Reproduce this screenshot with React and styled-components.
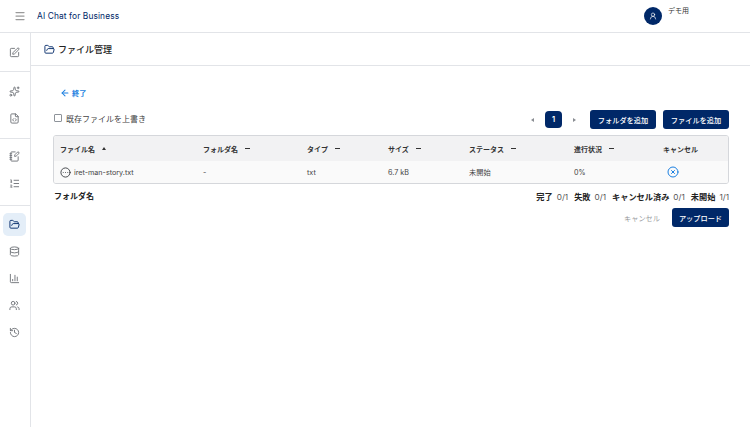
import styled, { createGlobalStyle } from 'styled-components';
import {
  Menu, SquarePen, Sparkles, FileCode, NotebookPen, ListOrdered, FolderOpen,
  Database, ChartColumn, Users, History, ArrowLeft, CircleEllipsis, CircleX, UserRound,
} from 'lucide-react';

const navy = '#002868';
const line = '#e2e4e8';

const GlobalStyle = createGlobalStyle`
  html, body { margin: 0; height: 100%; background: #fff; }
  body {
    font-family: Inter, "Noto Sans CJK JP", sans-serif;
    color: #222;
    overflow: hidden;
  }
  button { font-family: inherit; }
`;

const Page = styled.div`
  display: flex;
  flex-direction: column;
  width: 750px;
  height: 427px;
`;

const TopBar = styled.header`
  display: flex;
  align-items: center;
  height: 32px;
  flex: none;
  border-bottom: 1px solid ${line};
  padding-left: 14px;
`;

const MenuIcon = styled(Menu)`
  width: 12px;
  height: 12px;
  color: #9a9a9a;
`;

const Brand = styled.div`
  margin-left: 11px;
  font-size: 8.4px;
  font-weight: 400;
  letter-spacing: 0.1px;
  color: ${navy};
`;

const UserBox = styled.div`
  display: flex;
  align-items: flex-start;
  gap: 6px;
  margin-left: auto;
  margin-right: 39px;
  width: 67px;
`;

const Avatar = styled.div`
  display: flex;
  align-items: center;
  justify-content: center;
  width: 18px;
  height: 18px;
  border-radius: 50%;
  background: ${navy};
  color: #fff;
`;

const UserName = styled.div`
  font-size: 7px;
  line-height: 10px;
  margin-top: -1px;
  color: #333;
`;

const Body = styled.div`
  display: flex;
  flex: 1;
  min-height: 0;
`;

const Sidebar = styled.nav`
  display: flex;
  flex-direction: column;
  align-items: center;
  width: 30px;
  flex: none;
  border-right: 1px solid ${line};
`;

const NavGroup = styled.div`
  display: flex;
  flex-direction: column;
  align-items: center;
  box-sizing: border-box;
  width: 100%;
  gap: 4px;
  padding: ${(p) => p.$pad};
  border-bottom: ${(p) => (p.$last ? 'none' : `1px solid ${line}`)};
`;

const NavItem = styled.div`
  display: flex;
  align-items: center;
  justify-content: center;
  width: 23px;
  height: 23px;
  border-radius: 5px;
  background: ${(p) => (p.$active ? '#e4eef8' : 'transparent')};
  color: ${(p) => (p.$active ? navy : '#6f7277')};
  svg { width: 11px; height: 11px; }
`;

const Main = styled.main`
  flex: 1;
  min-width: 0;
  display: flex;
  flex-direction: column;
`;

const TitleBar = styled.div`
  display: flex;
  align-items: center;
  gap: 3px;
  height: 32px;
  flex: none;
  padding-left: 13px;
  border-bottom: 1px solid ${line};
`;

const TitleIcon = styled(FolderOpen)`
  width: 11px;
  height: 11px;
  color: ${navy};
`;

const Title = styled.h1`
  margin: 0;
  font-size: 9px;
  font-weight: 500;
  color: #222;
`;

const Content = styled.div`
  display: flex;
  flex-direction: column;
  padding: 20px 21px 0 22px;
`;

const BackLink = styled.a`
  display: flex;
  align-items: center;
  gap: 2px;
  height: 14px;
  margin-left: 7px;
  font-size: 7.2px;
  font-weight: 700;
  color: #1a7fe0;
  svg { width: 10px; height: 10px; }
`;

const Toolbar = styled.div`
  display: flex;
  align-items: center;
  height: 19px;
  margin-top: 10px;
`;

const CheckLabel = styled.label`
  display: flex;
  align-items: center;
  gap: 4px;
  margin: -3px 0 0 1px;
  font-size: 8px;
  color: #444;
`;

const CheckBox = styled.span`
  width: 6px;
  height: 6px;
  border: 1px solid #8e939a;
  border-radius: 1px;
`;

const Pager = styled.div`
  display: flex;
  align-items: center;
  gap: 11px;
  margin-left: auto;
  margin-right: 14px;
`;

const PagerArrow = styled.span`
  width: 0;
  height: 0;
  border-top: 2.5px solid transparent;
  border-bottom: 2.5px solid transparent;
  border-left: ${(p) => (p.$dir === 'right' ? '3px solid #8a8d92' : 'none')};
  border-right: ${(p) => (p.$dir === 'left' ? '3px solid #8a8d92' : 'none')};
`;

const PageNumber = styled.span`
  display: flex;
  align-items: center;
  justify-content: center;
  width: 17px;
  height: 17px;
  border-radius: 4px;
  background: ${navy};
  color: #fff;
  font-size: 7.5px;
  font-weight: 600;
`;

const PrimaryButton = styled.button`
  height: 19px;
  padding: 0;
  width: ${(p) => p.$width}px;
  margin-left: ${(p) => p.$gap || 0}px;
  border: none;
  border-radius: 3px;
  background: ${navy};
  color: #fff;
  font-size: 7.2px;
  font-weight: 500;
`;

const Table = styled.div`
  margin-top: 6px;
  border: 1px solid #d5d7db;
  border-radius: 3px;
  overflow: hidden;
`;

const Row = styled.div`
  display: grid;
  grid-template-columns: 149px 104px 81px 81px 105px 89px 1fr;
  align-items: center;
  height: ${(p) => p.$height}px;
  background: ${(p) => p.$bg};
`;

const HeadCell = styled.div`
  display: flex;
  align-items: center;
  gap: 7px;
  padding-left: ${(p) => (p.$first ? 6 : 0)}px;
  font-size: 7px;
  font-weight: 700;
  color: #333;
`;

const Cell = styled.div`
  display: flex;
  align-items: center;
  gap: 3px;
  padding-left: ${(p) => (p.$first ? 6 : 0)}px;
  font-size: 7.2px;
  color: #444;
`;

const SortDash = styled.span`
  width: 5px;
  height: 1px;
  background: #333;
`;

const SortUp = styled.span`
  width: 0;
  height: 0;
  border-left: 2.5px solid transparent;
  border-right: 2.5px solid transparent;
  border-bottom: 3px solid #333;
`;

const StatusIcon = styled(CircleEllipsis)`
  width: 11px;
  height: 11px;
  color: #3a3d42;
`;

const CancelIcon = styled(CircleX)`
  width: 12px;
  height: 12px;
  margin-left: 4px;
  color: #1a7fe0;
`;

const Summary = styled.div`
  display: flex;
  align-items: center;
  justify-content: space-between;
  margin-top: 5px;
  height: 13px;
`;

const FolderLabel = styled.div`
  margin-left: 1px;
  font-size: 8px;
  font-weight: 700;
  color: #222;
`;

const Counts = styled.div`
  display: flex;
  gap: 6px;
  font-size: 8.2px;
  color: #555;
  b { font-weight: 700; color: #222; margin-right: 4px; }
`;

const Actions = styled.div`
  display: flex;
  align-items: center;
  justify-content: flex-end;
  gap: 12px;
  margin-top: 6px;
`;

const GhostButton = styled.button`
  border: none;
  background: none;
  padding: 0;
  font-size: 7.2px;
  color: #9a9ca0;
`;

const navGroups = [
  { pad: '8px 1px 7px 0', icons: [SquarePen] },
  { pad: '8px 1px 8px 0', icons: [Sparkles, FileCode] },
  { pad: '6px 1px 10px 0', icons: [NotebookPen, ListOrdered] },
  { pad: '7px 1px 0 0', icons: [FolderOpen, Database, ChartColumn, Users, History], last: true },
];

const columns = ['フォルダ名', 'タイプ', 'サイズ', 'ステータス', '進行状況'];
const counts = [['完了', '0/1'], ['失敗', '0/1'], ['キャンセル済み', '0/1'], ['未開始', '1/1']];

export default function App() {
  return (
    <Page>
      <GlobalStyle />
      <TopBar>
        <MenuIcon strokeWidth={2.5} />
        <Brand>AI Chat for Business</Brand>
        <UserBox>
          <Avatar><UserRound size={8} /></Avatar>
          <UserName>デモ用</UserName>
        </UserBox>
      </TopBar>
      <Body>
        <Sidebar>
          {navGroups.map((group) => (
            <NavGroup key={group.pad} $pad={group.pad} $last={group.last}>
              {group.icons.map((Icon) => (
                <NavItem key={Icon.displayName} $active={Icon === FolderOpen}><Icon /></NavItem>
              ))}
            </NavGroup>
          ))}
        </Sidebar>
        <Main>
          <TitleBar>
            <TitleIcon />
            <Title>ファイル管理</Title>
          </TitleBar>
          <Content>
            <BackLink><ArrowLeft strokeWidth={2.5} />終了</BackLink>
            <Toolbar>
              <CheckLabel><CheckBox />既存ファイルを上書き</CheckLabel>
              <Pager>
                <PagerArrow $dir="left" />
                <PageNumber>1</PageNumber>
                <PagerArrow $dir="right" />
              </Pager>
              <PrimaryButton $width={66}>フォルダを追加</PrimaryButton>
              <PrimaryButton $width={66} $gap={7}>ファイルを追加</PrimaryButton>
            </Toolbar>
            <Table>
              <Row $height={25} $bg="#f2f2f3">
                <HeadCell $first>ファイル名<SortUp /></HeadCell>
                {columns.map((c) => <HeadCell key={c}>{c}<SortDash /></HeadCell>)}
                <HeadCell>キャンセル</HeadCell>
              </Row>
              <Row $height={22} $bg="#fafafa">
                <Cell $first><StatusIcon />iret-man-story.txt</Cell>
                <Cell>-</Cell>
                <Cell>txt</Cell>
                <Cell>6.7 kB</Cell>
                <Cell>未開始</Cell>
                <Cell>0%</Cell>
                <Cell><CancelIcon /></Cell>
              </Row>
            </Table>
            <Summary>
              <FolderLabel>フォルダ名</FolderLabel>
              <Counts>
                {counts.map(([k, v]) => <span key={k}><b>{k}</b>{v}</span>)}
              </Counts>
            </Summary>
            <Actions>
              <GhostButton>キャンセル</GhostButton>
              <PrimaryButton $width={57}>アップロード</PrimaryButton>
            </Actions>
          </Content>
        </Main>
      </Body>
    </Page>
  );
}
